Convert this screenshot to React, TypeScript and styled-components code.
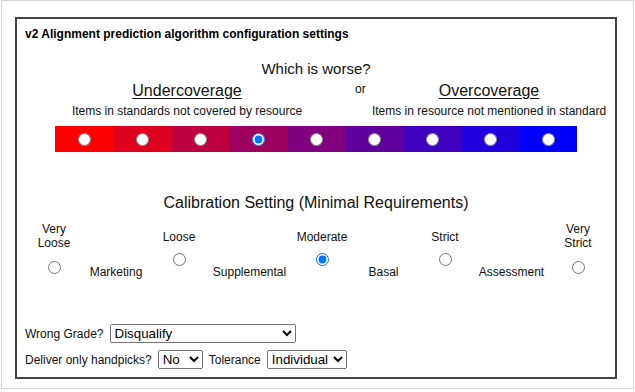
import React from "react";
import styled, { createGlobalStyle } from "styled-components";

const Global = createGlobalStyle`
  html, body { margin: 0; padding: 0; background: #fff; }
  body { font-family: "Liberation Sans", Arial, sans-serif; color: #111; }
  * { box-sizing: border-box; }
`;

const Frame = styled.div`
  margin-left: 1px;
  width: 633px;
  height: 389px;
  border: 1px solid #d6d6d6;
  padding: 16px 0 0 13px;
`;

const Panel = styled.div`
  width: 602px;
  height: 362px;
  border: 2px solid #444;
  padding: 8px;
  display: flex;
  flex-direction: column;
`;

const Title = styled.div`
  font-size: 12px;
  font-weight: bold;
  line-height: 14px;
  color: #000;
`;

const Question = styled.div`
  margin-top: 19px;
  text-align: center;
  font-size: 15px;
  line-height: 18px;
`;

const CompareRow = styled.div`
  display: flex;
  margin-top: 4px;
  margin-left: 42px;
`;

const Side = styled.div<{ $w: number }>`
  width: ${(p) => p.$w}px;
  flex-shrink: 0;
  display: flex;
  flex-direction: column;
  align-items: center;
  gap: 4px;
`;

const SideHeading = styled.span`
  font-size: 16px;
  line-height: 18px;
  text-decoration: underline;
  text-underline-offset: 2px;
`;

const SideDesc = styled.span`
  font-size: 12px;
  line-height: 14px;
  white-space: nowrap;
`;

const Or = styled.div`
  width: 64px;
  flex-shrink: 0;
  padding-left: 48px;
  font-size: 12px;
  line-height: 14px;
`;

const Bar = styled.div`
  margin: 8px auto 0;
  display: flex;
  width: 522px;
  height: 26px;
`;

const Cell = styled.label<{ $c: string }>`
  width: 58px;
  height: 26px;
  background: ${(p) => p.$c};
  display: flex;
  align-items: center;
  justify-content: center;
`;

const Radio = styled.input.attrs({ type: "radio" })`
  margin: 0;
  width: 13px;
  height: 13px;
`;

const CalHeading = styled.div`
  margin-top: 42px;
  text-align: center;
  font-size: 16px;
  line-height: 18px;
`;

const CalGrid = styled.div`
  margin-top: 5px;
  margin-left: 5px;
  display: grid;
  grid-template-columns: 48px 76px 50px 91px 54px 69px 54px 79px 54px;
  align-items: center;
  font-size: 12px;
  line-height: 14px;
`;

const Level = styled.label<{ $gap: number }>`
  display: flex;
  flex-direction: column;
  align-items: center;
  text-align: center;
  gap: ${(p) => p.$gap}px;
`;

const Purpose = styled.span`
  text-align: center;
  margin-top: 48px;
  white-space: nowrap;
`;

const Form = styled.div`
  margin-top: auto;
  display: flex;
  flex-direction: column;
  gap: 7px;
  font-size: 12px;
`;

const FormRow = styled.div`
  display: flex;
  align-items: center;
  gap: 6px;
`;

const Select = styled.select<{ $w: number }>`
  width: ${(p) => p.$w}px;
  height: 19px;
  font-family: "Liberation Sans", Arial, sans-serif;
  font-size: 13.33px;
  color: #000;
`;

const colors = Array.from({ length: 9 }, (_, i) => {
  const r = Math.round(255 * (1 - i / 8));
  const b = Math.round((255 * i) / 8);
  return `rgb(${r},0,${b})`;
});

const levels: { label: React.ReactNode; purpose?: string; gap: number; checked?: boolean }[] = [
  { label: <>Very<br />Loose</>, purpose: "Marketing", gap: 11 },
  { label: "Loose", purpose: "Supplemental", gap: 9 },
  { label: "Moderate", purpose: "Basal", gap: 9, checked: true },
  { label: "Strict", purpose: "Assessment", gap: 9 },
  { label: <>Very<br />Strict</>, gap: 11 },
];

export default function App() {
  return (
    <>
      <Global />
      <Frame>
        <Panel>
          <Title>v2 Alignment prediction algorithm configuration settings</Title>
          <Question>Which is worse?</Question>
          <CompareRow>
            <Side $w={240}>
              <SideHeading>Undercoverage</SideHeading>
              <SideDesc>Items in standards not covered by resource</SideDesc>
            </Side>
            <Or>or</Or>
            <Side $w={236}>
              <SideHeading>Overcoverage</SideHeading>
              <SideDesc>Items in resource not mentioned in standard</SideDesc>
            </Side>
          </CompareRow>
          <Bar>
            {colors.map((c, i) => (
              <Cell key={i} $c={c}>
                <Radio name="worse" defaultChecked={i === 3} />
              </Cell>
            ))}
          </Bar>
          <CalHeading>Calibration Setting (Minimal Requirements)</CalHeading>
          <CalGrid>
            {levels.map((l, i) => (
              <React.Fragment key={i}>
                <Level $gap={l.gap}>
                  <span>{l.label}</span>
                  <Radio name="cal" defaultChecked={l.checked} />
                </Level>
                {l.purpose && <Purpose>{l.purpose}</Purpose>}
              </React.Fragment>
            ))}
          </CalGrid>
          <Form>
            <FormRow>
              <span>Wrong Grade?</span>
              <Select $w={186} defaultValue="Disqualify">
                <option>Disqualify</option>
                <option>Allow</option>
              </Select>
            </FormRow>
            <FormRow>
              <span>Deliver only handpicks?</span>
              <Select $w={45} defaultValue="No">
                <option>No</option>
                <option>Yes</option>
              </Select>
              <span>Tolerance</span>
              <Select $w={80} defaultValue="Individual">
                <option>Individual</option>
                <option>Group</option>
              </Select>
            </FormRow>
          </Form>
        </Panel>
      </Frame>
    </>
  );
}
